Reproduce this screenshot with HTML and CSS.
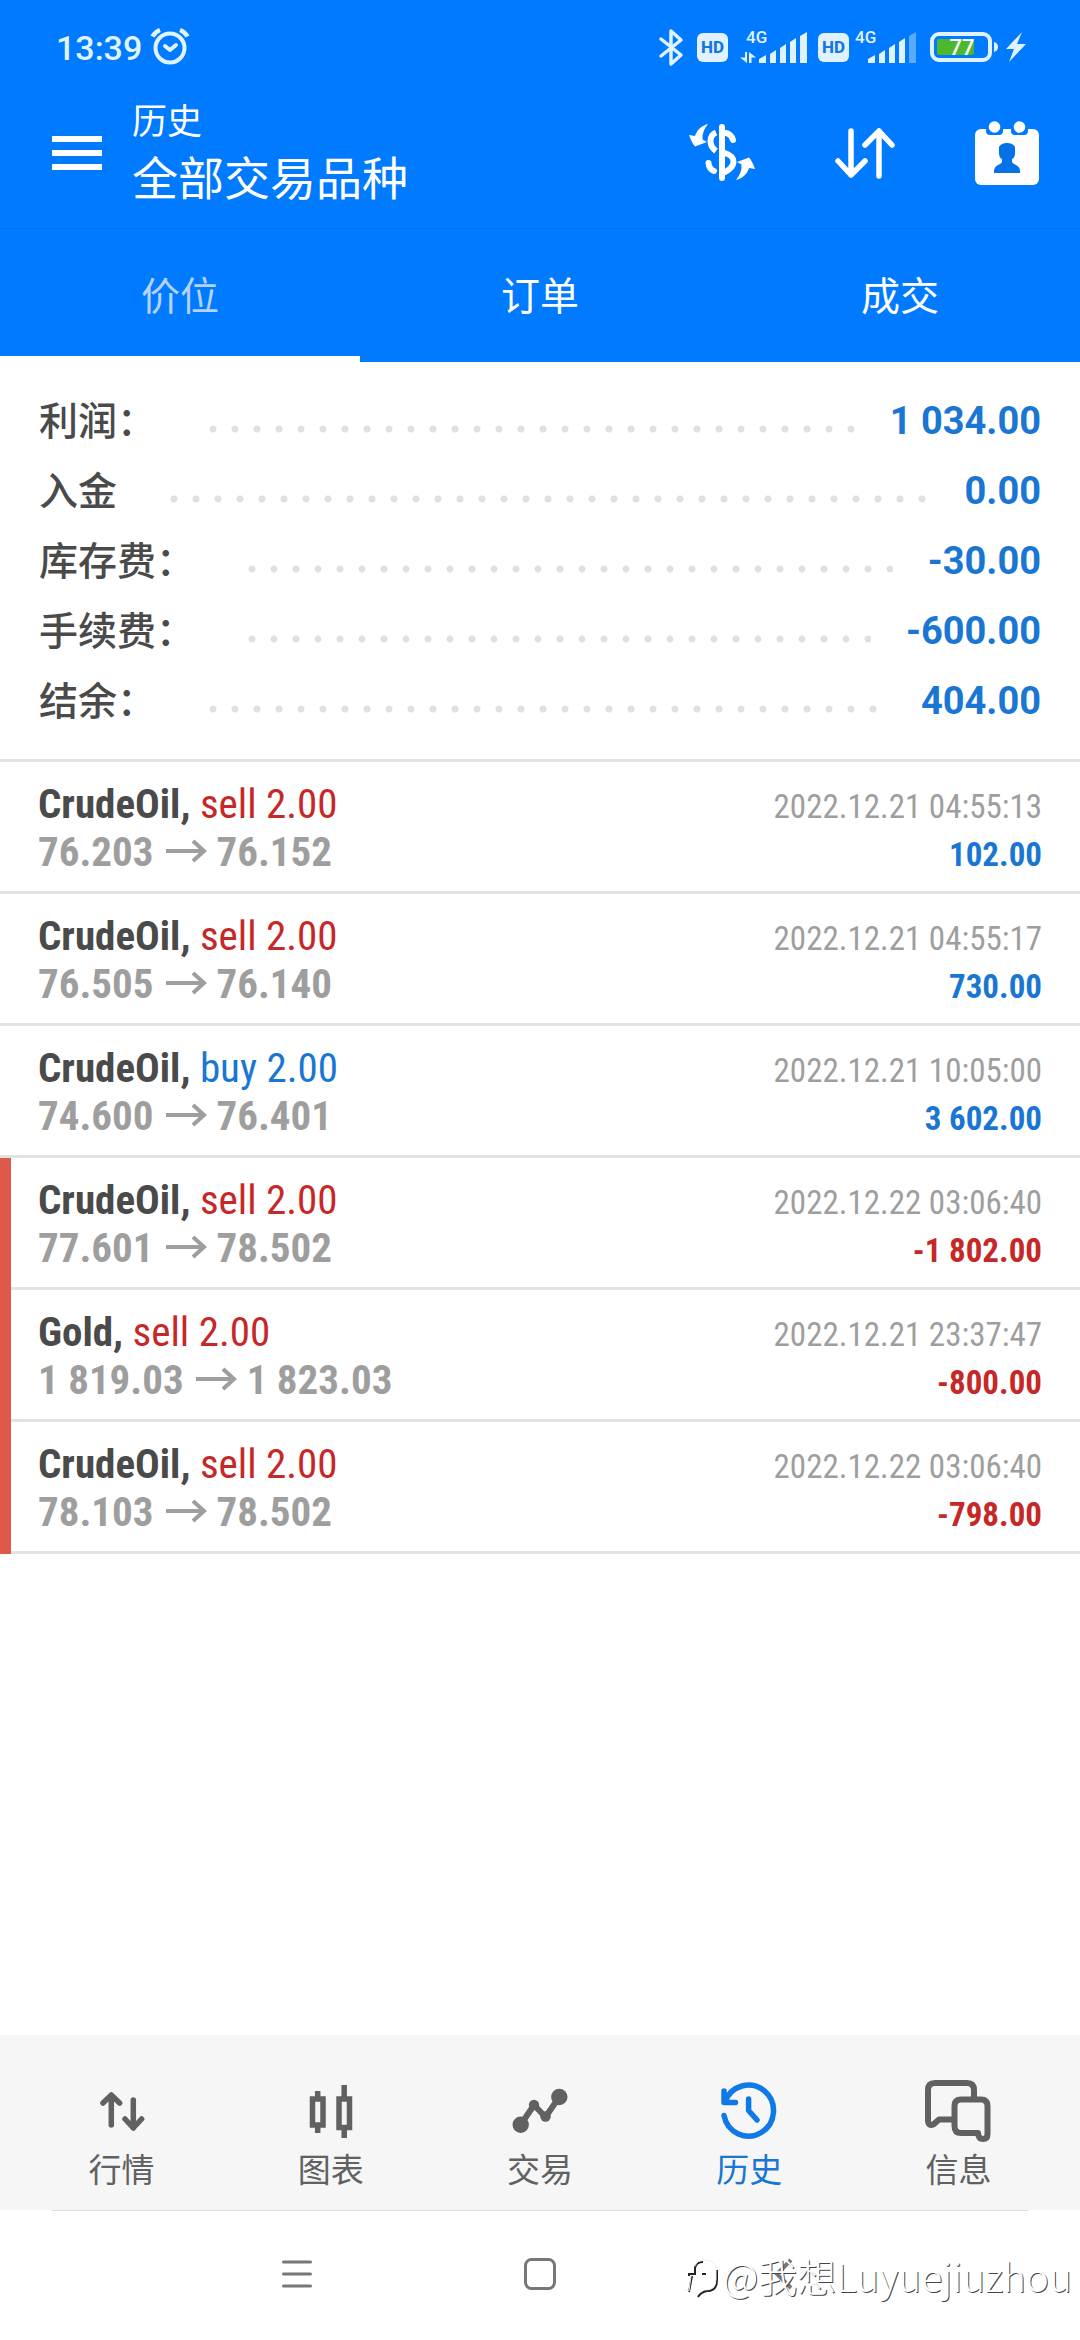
FILE: index.html
```html
<!DOCTYPE html>
<html lang="zh-CN">
<head>
<meta charset="utf-8">
<meta name="viewport" content="width=device-width, initial-scale=1">
<title>历史</title>
<link rel="stylesheet" href="styles.css">
</head>
<body>
<svg class="defs" width="0" height="0" aria-hidden="true">
  <symbol id="arrow" viewBox="0 0 42 24"><path d="M0 12H38M27 2L38 12L27 22" fill="none" stroke="currentColor" stroke-width="4"/></symbol>
</svg>
<div class="app">
  <header class="header">
    <div class="status">
      <span class="clock">13:39</span>
      <svg class="alarm" width="40" height="40" viewBox="0 0 40 40" fill="none" stroke="#dff4ff" stroke-width="4" stroke-linecap="round" stroke-linejoin="round"><circle cx="20" cy="21" r="14.500"/><path d="M15 19L20 23L26 18"/><path d="M2.500 9.500Q5 5 10 3M37.500 9.500Q35 5 30 3" stroke-width="4.500" stroke-linecap="butt"/></svg>
      <svg class="bluetooth" width="25" height="39" viewBox="0 0 25 39" fill="none" stroke="#e0f2ff" stroke-width="3.500" stroke-linejoin="round" stroke-linecap="round"><path d="M2 11L22 27L12 36V3L22 12L2 28"/></svg>
      <span class="hd hd-first">HD</span>
      <svg class="signal-first" width="67" height="34" viewBox="0 0 67 34" fill="#e0f2ff"><text x="6" y="13" class="net">4G</text><path d="M5 22H7V33L0 27.500H5ZM9 33V22L16 27.500H11.500V33Z"/><path d="M19 33V29L26 25V33ZM30 33V24L36 20V33ZM40 33V18L46 14V33ZM50 33V12L56 8V33ZM60 33V6L67 2V33Z"/></svg>
      <span class="hd hd-second">HD</span>
      <svg class="signal-second" width="61" height="34" viewBox="0 0 61 34" fill="#e0f2ff"><text x="0" y="13" class="net">4G</text><path d="M13 33V29L20 25V33ZM24 33V24L30 20V33ZM34 33V18L40 14V33ZM44 33V12L50 8V33Z"/><path d="M54 33V6L61 2V33Z" opacity=".4"/></svg>
      <svg class="battery" width="68" height="30" viewBox="0 0 68 30"><rect x="2" y="2" width="58" height="26" rx="7" fill="none" stroke="#e0f2ff" stroke-width="4"/><rect x="7" y="7" width="37" height="16" rx="2" fill="#4cb82c"/><path d="M64 10Q68 11 68 15T64 20Z" fill="#e0f2ff"/><text x="32" y="23" text-anchor="middle" class="charge">77</text></svg>
      <svg class="bolt" width="20" height="30" viewBox="0 0 20 30" fill="#e0f2ff"><path d="M16 0L0 17H8L3 30L20 12H11Z"/></svg>
    </div>
    <div class="toolbar">
      <button class="icon-button" aria-label="菜单"><svg width="50" height="36" viewBox="0 0 50 36" fill="#fff"><path d="M0 1H50V7H0ZM0 15H50V21H0ZM0 29H50V35H0Z"/></svg></button>
      <div class="titles">
        <h1 class="title">历史</h1>
        <p class="subtitle">全部交易品种</p>
      </div>
      <div class="actions">
        <button class="icon-button" aria-label="货币"><svg width="66" height="58" viewBox="0 0 66 58" fill="none" stroke="#fff" stroke-width="6" stroke-linecap="round"><path d="M33 3V54M37 9Q42 10 44 16M36 29Q45 32 44.500 38T36 48M19.500 39Q20 45 25 47"/><path d="M27 8.500Q21.500 11 21.500 17T27 27" stroke-linecap="butt"/><path id="turn" d="M19 0C12 2 8 6 6 12L0 11C2 16 3 19 6 22.500L18 18L13.500 15.500C13 10 15 5 19 0Z" fill="#fff" stroke="none"/><use href="#turn" transform="rotate(180 33 28)"/></svg></button>
        <button class="icon-button" aria-label="排序"><svg width="60" height="52" viewBox="0 0 60 52" fill="none" stroke="#fff" stroke-width="5.500" stroke-linecap="round" stroke-linejoin="round"><path d="M16 4V48M3 34L16 48L30 34M44 49V4M30 18L44 4L57 18"/></svg></button>
        <button class="icon-button" aria-label="日期"><svg width="64" height="64" viewBox="0 0 64 64"><rect y="8" width="64" height="56" rx="6" fill="#fff"/><path d="M11 7H28V10Q28 14 24 14H15Q11 14 11 10ZM36 7H53V10Q53 14 49 14H40Q36 14 36 10Z" fill="#007aff"/><circle cx="19.500" cy="6" r="5.800" fill="#fff"/><circle cx="44.500" cy="6" r="5.800" fill="#fff"/><path d="M24 26Q26 22 32 22T40 26V32Q40 37 37 38V41Q38 43 41 44Q45 46 45 50V52H19V50Q19 46 23 44Q26 43 27 41V38Q24 37 24 32Z" fill="#0672e8"/></svg></button>
      </div>
    </div>
    <nav class="tabs">
      <a class="tab tab-active" href="#positions">价位</a>
      <a class="tab" href="#orders">订单</a>
      <a class="tab" href="#deals">成交</a>
    </nav>
  </header>

  <main class="main">
    <dl class="summary">
      <div class="sum-row"><dt>利润：</dt><dd>1 034.00</dd></div>
      <div class="sum-row"><dt>入金</dt><dd>0.00</dd></div>
      <div class="sum-row"><dt>库存费：</dt><dd>-30.00</dd></div>
      <div class="sum-row"><dt>手续费：</dt><dd>-600.00</dd></div>
      <div class="sum-row"><dt>结余：</dt><dd>404.00</dd></div>
    </dl>
    <ul class="trades">
      <li class="trade">
        <div class="line"><span class="name"><b>CrudeOil,</b> <span class="sell">sell 2.00</span></span><time>2022.12.21 04:55:13</time></div>
        <div class="line"><span class="prices">76.203<svg class="arrow"><use href="#arrow"/></svg>76.152</span><span class="profit">102.00</span></div>
      </li>
      <li class="trade">
        <div class="line"><span class="name"><b>CrudeOil,</b> <span class="sell">sell 2.00</span></span><time>2022.12.21 04:55:17</time></div>
        <div class="line"><span class="prices">76.505<svg class="arrow"><use href="#arrow"/></svg>76.140</span><span class="profit">730.00</span></div>
      </li>
      <li class="trade">
        <div class="line"><span class="name"><b>CrudeOil,</b> <span class="buy">buy 2.00</span></span><time>2022.12.21 10:05:00</time></div>
        <div class="line"><span class="prices">74.600<svg class="arrow"><use href="#arrow"/></svg>76.401</span><span class="profit">3 602.00</span></div>
      </li>
      <li class="trade stopped">
        <div class="line"><span class="name"><b>CrudeOil,</b> <span class="sell">sell 2.00</span></span><time>2022.12.22 03:06:40</time></div>
        <div class="line"><span class="prices">77.601<svg class="arrow"><use href="#arrow"/></svg>78.502</span><span class="profit loss">-1 802.00</span></div>
      </li>
      <li class="trade stopped">
        <div class="line"><span class="name"><b>Gold,</b> <span class="sell">sell 2.00</span></span><time>2022.12.21 23:37:47</time></div>
        <div class="line"><span class="prices">1 819.03<svg class="arrow"><use href="#arrow"/></svg>1 823.03</span><span class="profit loss">-800.00</span></div>
      </li>
      <li class="trade stopped">
        <div class="line"><span class="name"><b>CrudeOil,</b> <span class="sell">sell 2.00</span></span><time>2022.12.22 03:06:40</time></div>
        <div class="line"><span class="prices">78.103<svg class="arrow"><use href="#arrow"/></svg>78.502</span><span class="profit loss">-798.00</span></div>
      </li>
    </ul>
  </main>

  <nav class="bottom">
    <a class="item" href="#quotes"><svg class="glyph" viewBox="0 0 66 66" stroke-linecap="round" stroke-linejoin="round" stroke-width="5.500"><path d="M22.300 47V17M14 25L22.300 17L30.600 25M44.300 22V50M36 41L44.300 50L52.600 41"/></svg>行情</a>
    <a class="item" href="#charts"><svg class="glyph" viewBox="0 0 66 66" stroke-width="5.500"><path d="M14.500 21H25V47H14.500ZM41 21H51.500V49.500H41ZM19.700 13V19M19.700 48V55M46.200 7V19M46.200 50V60"/></svg>图表</a>
    <a class="item" href="#trade"><svg class="glyph" viewBox="0 0 66 66" stroke-width="6"><path d="M13.700 46.700L27 27L38.500 39L52.300 19"/><g fill="currentColor" stroke="none"><circle cx="13.700" cy="46.700" r="8.200"/><circle cx="27" cy="27" r="5.200"/><circle cx="38.500" cy="38.500" r="5.200"/><circle cx="52.300" cy="19" r="8.200"/></g></svg>交易</a>
    <a class="item item-active" href="#history"><svg class="glyph" viewBox="0 0 66 66" stroke-linecap="round" stroke-linejoin="round" stroke-width="5.500"><path d="M9 24A25 25.500 0 1 1 8 37.500M8 13V24.500H19.500M32.600 21V32.500L41 42"/></svg>历史</a>
    <a class="item" href="#messages"><svg class="glyph" viewBox="0 0 66 66" stroke-linejoin="round" stroke-width="6"><path d="M49 20V12Q49 5 42 5H10Q3 5 3 12V42Q3 49 9 46L14 41.500H28"/><path d="M36 21.500H56Q62.500 21.500 62.500 28V56Q62.500 61 58 61T53 55H36Q29.500 55 29.500 48V28Q29.500 21.500 36 21.500Z"/></svg>信息</a>
  </nav>

  <footer class="system">
    <button class="icon-button" aria-label="最近任务"><svg width="32" height="32" viewBox="0 0 32 32" fill="none" stroke="#777" stroke-width="3" stroke-linecap="round"><path d="M2.500 4H29.500M2.500 16H29.500M2.500 28H29.500"/></svg></button>
    <button class="icon-button" aria-label="主页"><svg width="32" height="32" viewBox="0 0 32 32" fill="none" stroke="#777" stroke-width="3"><rect x="1.500" y="1.500" width="29" height="29" rx="6"/></svg></button>
    <button class="icon-button" aria-label="返回"><svg width="32" height="32" viewBox="0 0 32 32" fill="none" stroke="#777" stroke-width="4"><path d="M24 2L10 16L24 30"/></svg></button>
    <div class="watermark"><svg width="36" height="50" viewBox="0 0 36 50" fill="none" stroke-width="2"><path d="M6 26V24H12V18Q13 12 20 12M34 20V30Q34 41 24 41Q18 42 15 47M9 26L6 42M19 24H23" stroke="#222"/><path d="M1 39L6 41L8 26M12 16Q14 10 22 10Q33 10 33 20V29Q33 40 23 40" stroke="#eee" stroke-width="1"/></svg><span>@我想Luyuejiuzhou</span></div>
  </footer>
</div>
</body>
</html>
```
FILE: styles.css
```css
* {
  box-sizing: border-box;
}

body {
  margin: 0;
  background: #fff;
  font-family: Roboto, "Noto Sans CJK SC", sans-serif;
  color: #4a4a4a;
}

h1, p, dl, dt, dd, ul {
  margin: 0;
  padding: 0;
  font-weight: 400;
}

a {
  text-decoration: none;
}

svg {
  display: block;
  flex: none;
  overflow: visible;
}

.defs {
  position: absolute;
}

.app {
  display: flex;
  flex-direction: column;
  min-height: 100vh;
}

.icon-button {
  padding: 0;
  border: 0;
  background: none;
}

/* Header */
.header {
  background: #007aff;
  color: #fff;
}

.status {
  display: flex;
  align-items: center;
  height: 78px;
  padding: 16px 54px 0 56px;
}

.clock {
  padding-top: 2px;
  font-size: 34px;
  line-height: 40px;
  font-weight: 500;
  color: #dff4ff;
}

.alarm {
  margin-left: 8px;
}

.bluetooth {
  margin-left: auto;
}

.hd-first { margin-left: 13px; }
.signal-first { margin-left: 12px; }
.hd-second { margin-left: 11px; }
.signal-second { margin-left: 6px; }
.battery { margin-left: 14px; }
.bolt { margin-left: 8px; }

.hd {
  width: 31px;
  border-radius: 6px;
  background: #e0f2ff;
  font-size: 17px;
  font-weight: 800;
  line-height: 29px;
  text-align: center;
  color: #1478e0;
}

.net {
  font: 500 17px Roboto, sans-serif;
}

.charge {
  font: 500 22px Roboto, sans-serif;
  fill: #fff;
}

.toolbar {
  display: flex;
  align-items: center;
  height: 150px;
  padding: 0 41px 0 52px;
}

.titles {
  margin-left: 30px;
  padding-bottom: 8px;
  font-family: "Noto Sans CJK SC", sans-serif;
}

.title {
  font-size: 35px;
  line-height: 52px;
}

.subtitle {
  font-size: 46px;
  line-height: 60px;
}

.actions {
  display: flex;
  align-items: center;
  gap: 80px;
  margin-left: auto;
}

.tabs {
  display: grid;
  grid-template-columns: repeat(3, 1fr);
  border-top: 1px solid #0a6fe0;
}

.tab {
  padding-top: 10px;
  border-bottom: 6px solid transparent;
  font-size: 39px;
  line-height: 117px;
  text-align: center;
  color: #fff;
}

.tab-active {
  border-bottom-color: #fff;
  color: #b5d3f8;
}

/* Totals */
.main {
  flex: 1;
}

.summary {
  padding: 24px 39px 23px;
  border-bottom: 3px solid #e3e3e3;
}

.sum-row {
  display: flex;
  align-items: center;
  height: 70px;
}

.sum-row dt {
  padding-bottom: 6px;
  font-size: 39px;
  font-weight: 500;
}

.sum-row::before {
  content: "";
  order: 1;
  flex: 1;
  height: 8px;
  margin: 16px 35px 0 53px;
  background: radial-gradient(circle at 4px 4px, #e0e0e0 3px, transparent 4px) 0 0 / 22px 8px repeat-x;
}

.sum-row dd {
  order: 2;
  font-size: 38px;
  font-weight: 700;
  color: #1976d2;
}

/* Trades */
.trades {
  list-style: none;
  font-family: "Roboto Condensed", Roboto, sans-serif;
}

.trade {
  padding: 18px 38px;
  box-shadow: inset 0 -3px #e3e3e3;
}

.stopped {
  box-shadow: inset 11px 0 #dd5a4a, inset 0 -3px #e3e3e3;
}

.line {
  display: flex;
  align-items: baseline;
  justify-content: space-between;
  height: 48px;
  line-height: 48px;
}

.name {
  font-size: 41px;
}

.sell { color: #c62828; }
.buy { color: #1976d2; }

.line time {
  font-size: 33px;
  color: #9e9e9e;
}

.prices {
  font-size: 41px;
  font-weight: 700;
  color: #9e9e9e;
}

.arrow {
  display: inline-block;
  width: 42px;
  height: 24px;
  margin: 0 9px 0 12px;
  vertical-align: 3px;
}

.profit {
  font-size: 33px;
  font-weight: 700;
  color: #1976d2;
}

.loss {
  color: #c62828;
}

/* Bottom navigation */
.bottom {
  display: grid;
  grid-template-columns: repeat(5, 1fr);
  padding: 43px 17px 12px;
  background: #f6f6f6;
}

.item {
  display: flex;
  flex-direction: column;
  align-items: center;
  font-size: 33px;
  line-height: 54px;
  color: #616161;
}

.item-active {
  color: #1976d2;
}

.glyph {
  width: 66px;
  height: 66px;
  fill: none;
  stroke: currentColor;
}

.item-active .glyph {
  color: #1079e8;
}

.system {
  position: relative;
  display: flex;
  justify-content: center;
  gap: 211px;
  height: 130px;
  padding-bottom: 2px;
}

.system::before {
  content: "";
  position: absolute;
  top: 0;
  left: 52px;
  right: 52px;
  height: 1px;
  background: #ddd;
}

.watermark {
  position: absolute;
  right: 8px;
  top: 37px;
  display: flex;
  align-items: center;
  gap: 4px;
  font-family: "Noto Sans CJK SC", sans-serif;
  font-size: 39px;
  font-weight: 300;
  line-height: 56px;
  color: #fff;
  text-shadow: 1px 1px 0 #444;
}
```
